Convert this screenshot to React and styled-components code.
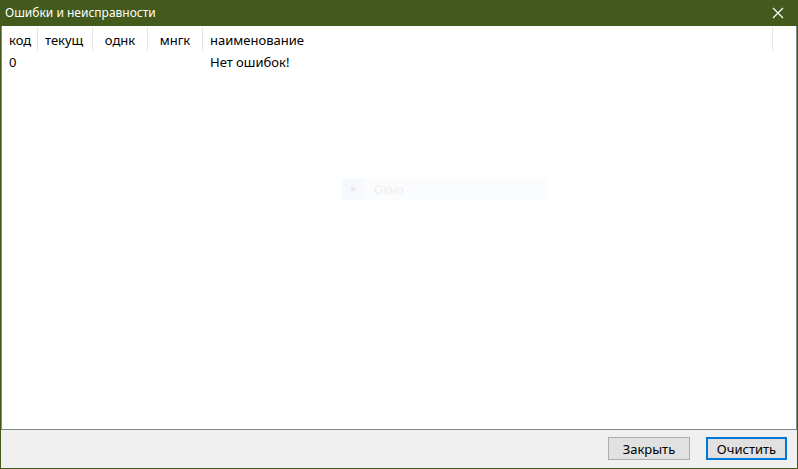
import styled, { createGlobalStyle } from 'styled-components'

const GlobalStyle = createGlobalStyle`
  html, body {
    margin: 0;
    padding: 0;
    background: #ffffff;
  }
  body {
    font-family: 'Noto Sans', 'Liberation Sans', sans-serif;
    font-size: 12px;
    color: #000000;
  }
`

const columns = [
  { title: 'код', width: 36, align: 'left' },
  { title: 'текущ', width: 55, align: 'left' },
  { title: 'однк', width: 55, align: 'center' },
  { title: 'мнгк', width: 55, align: 'center' },
  { title: 'наименование', width: 570, align: 'left' },
]

const rows = [{ code: '0', name: 'Нет ошибок!' }]

export default function App() {
  return (
    <>
      <GlobalStyle />
      <Window>
        <TitleBar>
          <Title>Ошибки и неисправности</Title>
          <CloseButton aria-label="close">
            <svg width="12" height="12" viewBox="0 0 12 12">
              <path d="M1 1 L11 11 M11 1 L1 11" stroke="#ffffff" strokeWidth="1.2" fill="none" />
            </svg>
          </CloseButton>
        </TitleBar>
        <Body>
          <ListView>
            <HeaderRow>
              {columns.map((c, i) => (
                <HeaderCell key={i} $width={c.width} $align={c.align}>
                  {c.title}
                </HeaderCell>
              ))}
            </HeaderRow>
            {rows.map((r, i) => (
              <Row key={i}>
                <Cell $width={36}>{r.code}</Cell>
                <Cell $width={55} />
                <Cell $width={55} />
                <Cell $width={55} />
                <Cell $width={570}>{r.name}</Cell>
              </Row>
            ))}
            <Ghost>
              <GhostIcon />
              <GhostText>Окно</GhostText>
            </Ghost>
          </ListView>
          <Footer>
            <Button>Закрыть</Button>
            <Button $primary>Очистить</Button>
          </Footer>
        </Body>
      </Window>
    </>
  )
}

const Window = styled.div`
  width: 798px;
  height: 469px;
  display: flex;
  flex-direction: column;
  background: #435a1c;
  box-sizing: border-box;
`

const TitleBar = styled.div`
  height: 26px;
  display: flex;
  align-items: center;
  justify-content: space-between;
  padding: 0 0 0 5px;
  flex-shrink: 0;
`

const Title = styled.div`
  color: #ffffff;
  font-size: 12px;
  margin-top: -1px;
`

const CloseButton = styled.div`
  width: 46px;
  height: 26px;
  display: flex;
  align-items: center;
  justify-content: center;
  margin-right: -3px;
`

const Body = styled.div`
  flex: 1;
  display: flex;
  flex-direction: column;
  margin: 0 1px 1px 1px;
  background: #f0f0f0;
`

const ListView = styled.div`
  position: relative;
  height: 404px;
  box-sizing: border-box;
  border: 1px solid #828790;
  border-top: none;
  background: #ffffff;
`

const HeaderRow = styled.div`
  display: flex;
  height: 26px;
  padding-top: 1px;
  box-sizing: border-box;
`

const HeaderCell = styled.div`
  width: ${p => p.$width}px;
  flex-shrink: 0;
  box-sizing: border-box;
  border-right: 1px solid #e5e5e5;
  padding: 4px 7px 0 7px;
  text-align: ${p => p.$align};
  white-space: nowrap;
  height: 24px;
  font-size: 13px;
  color: #000000;
`

const Row = styled.div`
  display: flex;
  height: 19px;
  align-items: center;
`

const Cell = styled.div`
  width: ${p => p.$width}px;
  flex-shrink: 0;
  box-sizing: border-box;
  padding: 0 7px;
  white-space: nowrap;
  font-size: 13px;
`

const Ghost = styled.div`
  position: absolute;
  left: 340px;
  top: 152px;
  width: 205px;
  height: 22px;
  display: flex;
  align-items: center;
  gap: 10px;
  background: #fbfcfe;
`

const GhostIcon = styled.div`
  width: 22px;
  height: 22px;
  background: #f5f8fd;
  position: relative;
  &::after {
    content: '';
    position: absolute;
    left: 9px;
    top: 9px;
    width: 4px;
    height: 4px;
    background: #f0e4e4;
  }
`

const GhostText = styled.div`
  color: #eeeeee;
  font-size: 12px;
`

const Footer = styled.div`
  flex: 1;
  display: flex;
  justify-content: flex-end;
  align-items: center;
  gap: 16px;
  padding: 0 10px 1px 0;
`

const Button = styled.button`
  width: ${p => (p.$primary ? 81 : 82)}px;
  height: 23px;
  box-sizing: border-box;
  font-family: 'Noto Sans', 'Liberation Sans', sans-serif;
  font-size: 13px;
  color: #000000;
  background: #e1e1e1;
  border: ${p => (p.$primary ? '2px solid #0078d7' : '1px solid #adadad')};
  padding: 0;
  margin: 0;
`
